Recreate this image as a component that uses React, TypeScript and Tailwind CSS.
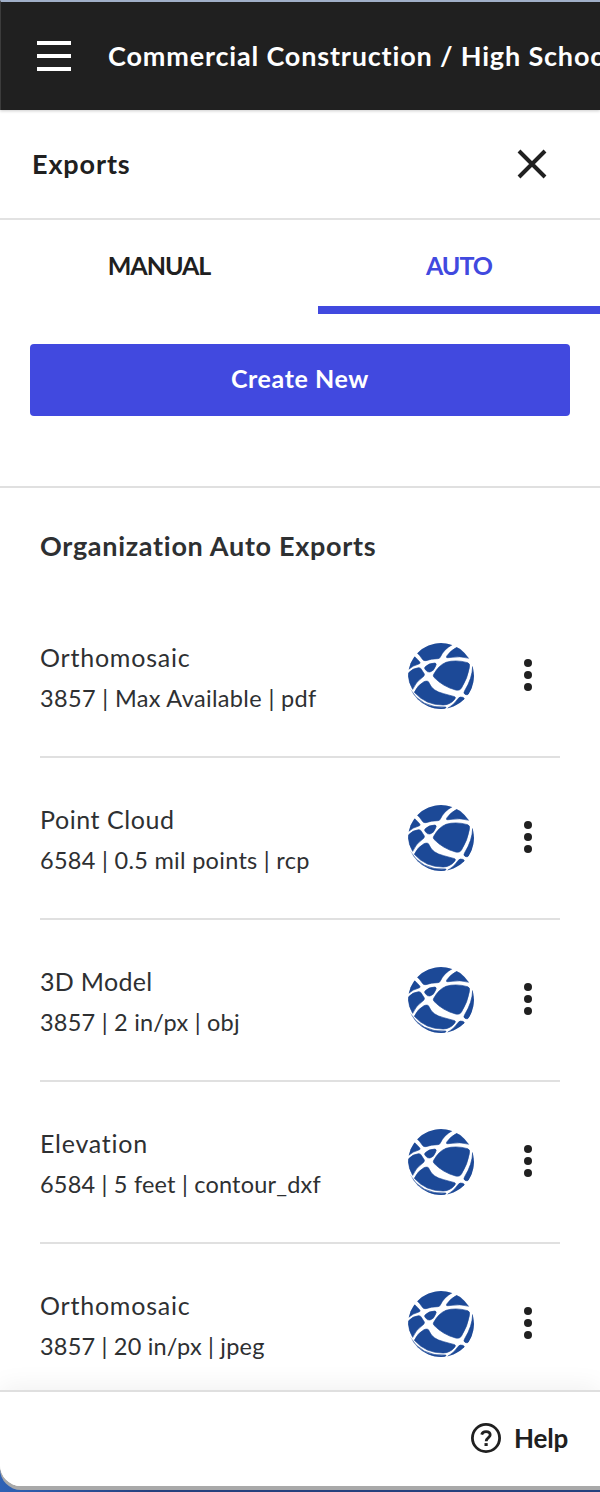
const autoExports = [
  { id: 1, name: 'Orthomosaic', nameClass: 'tracking-[0.78px]', details: '3857 | Max Available | pdf', detailsClass: 'tracking-[0.35px]' },
  { id: 2, name: 'Point Cloud', nameClass: 'tracking-[0.55px]', details: '6584 | 0.5 mil points | rcp', detailsClass: 'tracking-[0.29px]' },
  { id: 3, name: '3D Model', nameClass: 'tracking-[0.3px]', details: '3857 | 2 in/px | obj', detailsClass: 'tracking-[0.23px]' },
  { id: 4, name: 'Elevation', nameClass: 'tracking-[0.75px]', details: '6584 | 5 feet | contour_dxf', detailsClass: 'tracking-[0.2px]' },
  { id: 5, name: 'Orthomosaic', nameClass: 'tracking-[0.78px]', details: '3857 | 20 in/px | jpeg', detailsClass: 'tracking-[0.2px]' },
]

function GlobeIcon() {
  return (
    <svg
      className="h-[66px] w-[66px] rounded-full"
      viewBox="6 6 198 198"
      fill="#1c4997"
      stroke="#1c4997"
      strokeWidth="2"
      strokeLinejoin="round"
    >
      <path d="M34 36A99 99 0 0 1 139 11Q113 25 103 48Q101 53 95 53Q76 53 60 59Q52 61 48 53Q42 44 34 36Z" />
      <path d="M154 18A99 99 0 0 1 197 53Q160 43 127 50Q118 51 123 44Q134 28 154 18Z" />
      <path d="M25 47Q28 47 42 64Q44 68 36 70Q22 73 8 85A99 99 0 0 1 25 47Z" />
      <path d="M57 78Q68 66 87 66Q93 67 89 75Q83 91 72 93Q65 95 58 86Q54 81 57 78Z" />
      <path d="M6 97Q20 81 38 80Q44 79 48 88L55 99Q57 104 48 110Q30 122 20 145A99 99 0 0 1 6 97Z" />
      <path d="M83 100Q98 73 120 64Q149 55 185 65Q193 67 190 80Q185 111 166 142Q161 150 149 147Q111 137 84 109Q80 105 83 100Z" />
      <path d="M25 154Q34 133 54 122Q67 117 70 127Q79 150 113 158L146 167Q151 169 145 176Q132 191 112 192Q60 193 25 154Z" />
      <path d="M200 76A99 99 0 0 1 189 158Q184 164 177 160Q171 157 176 149Q199 112 200 76Z" />
      <path d="M157 172Q161 166 170 169Q178 171 173 177A99 99 0 0 1 125 202Q143 193 157 172Z" />
      <path d="M11 143Q47 203 118 198Q123 199 117 203A99 99 0 0 1 11 143Z" />
    </svg>
  )
}

function HelpIcon() {
  return (
    <svg className="h-[30px] w-[30px]" viewBox="0 0 30 30" fill="none" stroke="#202020">
      <circle cx="15" cy="15" r="13.6" strokeWidth="2.8" />
      <path d="M10.7 11.7C11.2 9.7 12.8 8.6 15 8.6C17.6 8.6 19.2 9.9 19.2 12C19.2 14.5 15.2 14.8 15.2 18.2" strokeWidth="2.8" />
      <path d="M15.1 20.1V23" strokeWidth="3.2" />
    </svg>
  )
}

function KebabIcon() {
  return (
    <svg className="h-8 w-2" viewBox="0 0 8 32" fill="#202020">
      <circle cx="4" cy="4" r="4" />
      <circle cx="4" cy="16" r="4" />
      <circle cx="4" cy="28" r="4" />
    </svg>
  )
}

export default function App() {
  return (
    <div className="h-[1492px] w-[600px] overflow-hidden bg-[linear-gradient(90deg,#2f62b5,#25417e_25%)] font-['Lato','Open_Sans',sans-serif] text-[#202020]">
      <div className="h-[1490px] overflow-hidden rounded-bl-[21px] bg-[#a9a9a9]">
        <div className="flex h-[1486px] flex-col overflow-hidden rounded-bl-[21px] bg-white">
          <header className="relative z-10 flex h-[110px] shrink-0 items-center border-t-2 border-l border-t-[#a0afc8] border-l-[#3c3c3c] bg-[#202020] pl-9 shadow-[0_1px_3px_rgba(0,0,0,0.2)]">
            <button aria-label="Menu" className="mr-[37px] flex w-[34px] shrink-0 flex-col gap-[9px]">
              <span className="h-1 bg-white" />
              <span className="h-1 bg-white" />
              <span className="h-1 bg-white" />
            </button>
            <h1 className="text-[27px] font-bold tracking-[0.83px] whitespace-nowrap text-white">
              Commercial Construction / High School
            </h1>
          </header>

          <div className="flex h-[110px] shrink-0 items-center justify-between border-b-2 border-[#e2e2e2] pr-[53px] pl-8">
            <h2 className="text-[27px] font-bold tracking-[0.87px]">Exports</h2>
            <button aria-label="Close">
              <svg className="h-[30px] w-[30px]" viewBox="0 0 30 30" stroke="#202020" strokeWidth="4">
                <path d="M2 2L28 28M28 2L2 28" />
              </svg>
            </button>
          </div>

          <div className="flex h-[94px] shrink-0 text-[25px] font-bold tracking-[-1px]">
            <button className="w-[318px] border-b-8 border-transparent pt-1.5">MANUAL</button>
            <button className="flex-1 border-b-8 border-[#4149df] pt-1.5 text-[#4149df]">AUTO</button>
          </div>

          <div className="h-[174px] shrink-0 border-b-2 border-[#e0e0e0] px-[30px] pt-[30px]">
            <button className="h-[72px] w-full rounded bg-[#4149df] pb-0.5 text-[25px] font-bold tracking-[0.6px] text-white">
              Create New
            </button>
          </div>

          <main className="min-h-0 flex-1 overflow-hidden px-10 text-[#2e3032]">
            <h3 className="flex h-[108px] items-center pt-2 text-[27px] font-bold tracking-[0.7px]">
              Organization Auto Exports
            </h3>
            {autoExports.map((item) => (
              <div key={item.id} className="flex h-[162px] items-start border-b-2 border-[#e0e0e0] pt-[47px]">
                <div className="-mt-0.5 w-[368px] whitespace-nowrap">
                  <p className={`h-[41px] text-[25px] leading-[32px] ${item.nameClass}`}>{item.name}</p>
                  <p className={`text-[23.5px] leading-[32px] ${item.detailsClass}`}>{item.details}</p>
                </div>
                <GlobeIcon />
                <button aria-label="More options" className="mt-4 ml-[50px]">
                  <KebabIcon />
                </button>
              </div>
            ))}
          </main>

          <footer className="relative flex h-24 shrink-0 items-center justify-end border-t-2 border-[#dfdfdf] bg-white pr-8 pb-0.5 shadow-[0_-4px_24px_rgba(0,0,0,0.06)]">
            <button className="flex items-center gap-[13px] text-[26px] font-bold tracking-[-0.2px]">
              <HelpIcon />
              Help
            </button>
          </footer>
        </div>
      </div>
    </div>
  )
}
